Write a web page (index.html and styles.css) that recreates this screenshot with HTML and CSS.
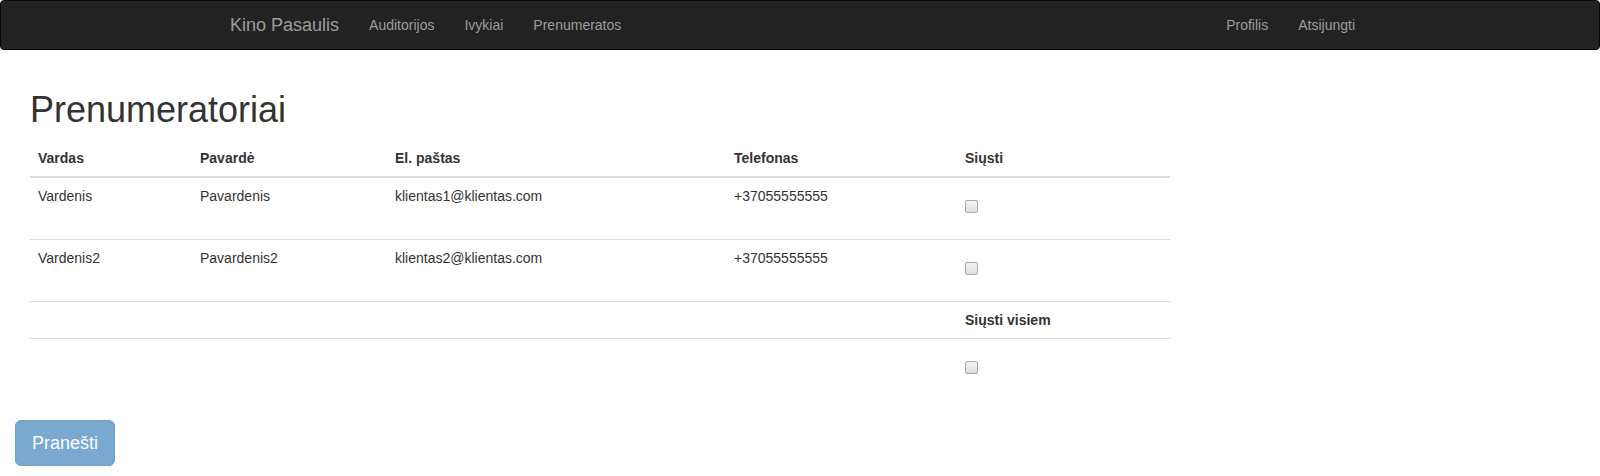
FILE: index.html
```html
<!DOCTYPE html>
<html lang="lt">
<head>
<meta charset="utf-8">
<title>Prenumeratoriai</title>
<link rel="stylesheet" href="styles.css">
</head>
<body>
<nav class="navbar">
  <div class="nav-container">
    <a class="brand" href="#">Kino Pasaulis</a>
    <ul class="nav">
      <li><a href="#">Auditorijos</a></li>
      <li><a href="#">Ivykiai</a></li>
      <li><a href="#">Prenumeratos</a></li>
    </ul>
    <ul class="nav nav-right">
      <li><a href="#">Profilis</a></li>
      <li><a href="#">Atsijungti</a></li>
    </ul>
  </div>
</nav>
<main class="content">
  <h1 class="title">Prenumeratoriai</h1>
  <table class="table">
    <colgroup>
      <col class="c1"><col class="c2"><col class="c3"><col class="c4"><col class="c5">
    </colgroup>
    <thead>
      <tr>
        <th>Vardas</th>
        <th>Pavardė</th>
        <th>El. paštas</th>
        <th>Telefonas</th>
        <th>Siųsti</th>
      </tr>
    </thead>
    <tbody>
      <tr>
        <td>Vardenis</td>
        <td>Pavardenis</td>
        <td>klientas1@klientas.com</td>
        <td>+37055555555</td>
        <td><div class="check"><input type="checkbox" class="cb"></div></td>
      </tr>
      <tr>
        <td>Vardenis2</td>
        <td>Pavardenis2</td>
        <td>klientas2@klientas.com</td>
        <td>+37055555555</td>
        <td><div class="check"><input type="checkbox" class="cb"></div></td>
      </tr>
      <tr>
        <td></td><td></td><td></td><td></td>
        <td class="bold">Siųsti visiem</td>
      </tr>
      <tr>
        <td></td><td></td><td></td><td></td>
        <td><div class="check"><input type="checkbox" class="cb"></div></td>
      </tr>
    </tbody>
  </table>
</main>
<div class="actions">
  <button class="btn" disabled>Pranešti</button>
</div>
</body>
</html>
```
FILE: styles.css
```css
* { box-sizing: border-box; }
html, body { margin: 0; padding: 0; }
body {
  font-family: "Liberation Sans", Arial, Helvetica, sans-serif;
  font-size: 14px;
  line-height: 20px;
  color: #333;
  background: #fff;
}
.navbar {
  height: 50px;
  background: #222;
  border: 1px solid #080808;
  border-radius: 4px;
  margin-bottom: 20px;
}
.nav-container {
  width: 1170px;
  margin: 0 auto;
  padding: 0 15px;
  display: flex;
  align-items: stretch;
}
.brand {
  margin-left: -15px;
  padding: 14px 15px;
  font-size: 18px;
  line-height: 20px;
  color: #9d9d9d;
  text-decoration: none;
}
.nav {
  list-style: none;
  margin: 0;
  padding: 0;
  display: flex;
}
.nav a {
  display: block;
  padding: 14px 15px;
  line-height: 20px;
  color: #9d9d9d;
  text-decoration: none;
}
.nav-right { margin-left: auto; }
.content {
  display: flow-root;
  padding: 0 30px;
}
.title {
  margin: 20px 0 10px;
  font-size: 36px;
  font-weight: 500;
  line-height: 1.1;
  color: #333;
}
.table {
  width: 1140px;
  border-collapse: collapse;
  border-spacing: 0;
  margin-bottom: 20px;
}
.c1 { width: 162px; }
.c2 { width: 195px; }
.c3 { width: 339px; }
.c4 { width: 231px; }
.c5 { width: 213px; }
.table th {
  text-align: left;
  vertical-align: bottom;
  padding: 8px;
  font-weight: bold;
  border-bottom: 2px solid #ddd;
}
.table td {
  vertical-align: top;
  padding: 8px;
  border-top: 1px solid #ddd;
}
.table tbody tr:first-child td { border-top: 0; }
.table td.bold { font-weight: bold; }
.check {
  height: 45px;
  padding-top: 14px;
}
.cb {
  -webkit-appearance: none;
  appearance: none;
  display: block;
  margin: 0;
  width: 13px;
  height: 13px;
  border: 1px solid #a8a8a8;
  border-radius: 2px;
  background: linear-gradient(#f4f4f4, #dedede);
}
.actions { padding: 0 15px; }
.btn {
  font-family: "Liberation Sans", Arial, Helvetica, sans-serif;
  font-size: 18px;
  line-height: 24px;
  padding: 10px 16px;
  border-radius: 6px;
  color: #fff;
  background: #337ab7;
  border: 1px solid #2e6da4;
  opacity: 0.65;
  cursor: not-allowed;
}
```
